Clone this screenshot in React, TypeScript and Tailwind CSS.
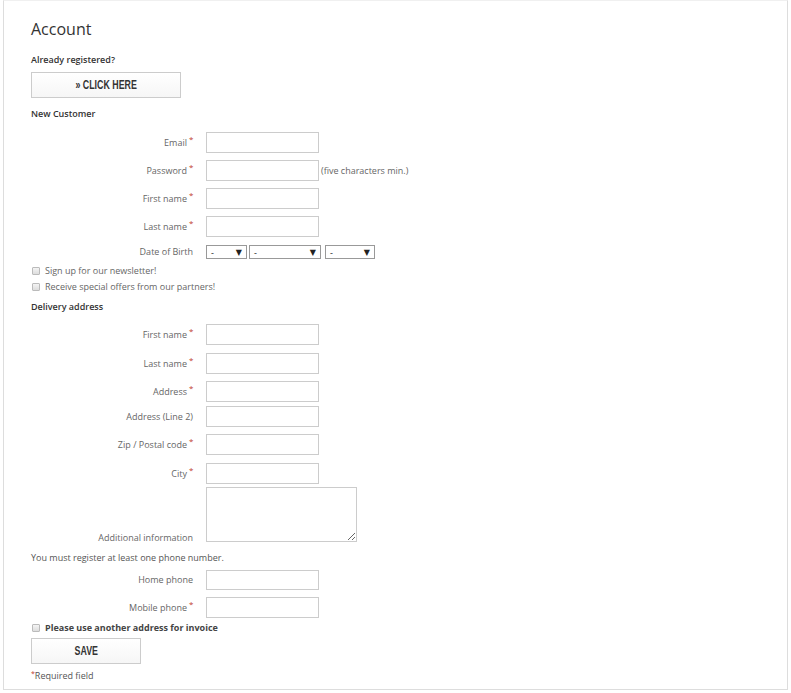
import React from 'react';

const font = { fontFamily: '"Open Sans", "DejaVu Sans", sans-serif' };

function Star() {
  return <span className="relative -top-[4px] ml-[2px] inline-block w-[5px] text-left text-[8px] leading-none text-[#c0392b]">*</span>;
}

function Row({ label, required, className = '', children, hint }: { label: string; required?: boolean; className?: string; children?: React.ReactNode; hint?: string }) {
  return (
    <div className={`flex items-center ${className}`}>
      <div className="w-[163px] text-right text-[9px] leading-[12px] text-[#666]">
        {label}
        {required ? <Star /> : <span className="inline-block w-[1px]" />}
      </div>
      <div className="ml-[12px] flex items-center">
        {children ?? <input className="h-[21px] w-[113px] border border-[#ccc] bg-white outline-none" />}
        {hint && <span className="ml-[2px] text-[9px] text-[#666]">{hint}</span>}
      </div>
    </div>
  );
}

function Select({ w }: { w: string }) {
  return (
    <div className={`flex h-[14px] ${w} items-center justify-between border border-[#999] px-[4px] text-[9px] leading-none text-[#222]`}>
      <span>-</span>
      <span className="text-[8px]">▼</span>
    </div>
  );
}

function Check({ label, bold }: { label: string; bold?: boolean }) {
  return (
    <div className="flex h-[12px] items-center">
      <span className="ml-[1px] h-[8px] w-[8px] rounded-[1px] border border-[#bbb] bg-gradient-to-b from-[#f4f4f4] to-[#ddd]" />
      <span className={`ml-[5px] text-[9px] leading-[12px] ${bold ? 'font-bold text-[#444]' : 'text-[#666]'}`}>{label}</span>
    </div>
  );
}

function Button({ w, children }: { w: string; children: React.ReactNode }) {
  return (
    <button className={`flex h-[26px] ${w} items-center justify-center border border-[#ccc] bg-gradient-to-b from-white to-[#f6f6f6]`}>
      <span className="inline-block scale-x-[0.68] text-[13px] font-bold text-[#333]" style={{ fontFamily: '"Liberation Sans", Arial, sans-serif' }}>
        {children}
      </span>
    </button>
  );
}

export default function App() {
  return (
    <div className="min-h-[693px] bg-white" style={font}>
      <div className="ml-[3px] w-[785px] border border-t-[#f0f0f0] border-[#ddd] pb-[6px] pl-[27px] pt-[19px]">
        <h1 className="text-[16px] leading-[18px] text-[#333]">Account</h1>
        <div className="mt-[16px] text-[9px] font-semibold leading-[12px] text-[#333]">Already registered?</div>
        <div className="mt-[6px]">
          <Button w="w-[150px]">» CLICK HERE</Button>
        </div>
        <div className="mt-[10px] text-[9px] font-semibold leading-[12px] text-[#333]">New Customer</div>

        <Row label="Email" required className="mt-[12px]" />
        <Row label="Password" required className="mt-[7px]" hint="(five characters min.)" />
        <Row label="First name" required className="mt-[7px]" />
        <Row label="Last name" required className="mt-[7px]" />
        <Row label="Date of Birth" className="mt-[8px]">
          <div className="flex">
            <Select w="w-[41px]" />
            <div className="ml-[2px]"><Select w="w-[72px]" /></div>
            <div className="ml-[4px]"><Select w="w-[50px]" /></div>
          </div>
        </Row>

        <div className="mt-[6px]"><Check label="Sign up for our newsletter!" /></div>
        <div className="mt-[4px]"><Check label="Receive special offers from our partners!" /></div>

        <div className="mt-[8px] text-[9px] font-semibold leading-[12px] text-[#333]">Delivery address</div>
        <Row label="First name" required className="mt-[11px]" />
        <Row label="Last name" required className="mt-[8px]" />
        <Row label="Address" required className="mt-[7px]" />
        <Row label="Address (Line 2)" className="mt-[4px]" />
        <Row label="Zip / Postal code" required className="mt-[7px]" />
        <Row label="City" required className="mt-[8px]" />
        <div className="mt-[3px] flex items-end">
          <div className="-mb-[2px] w-[163px] text-right text-[9px] leading-[12px] text-[#666]">
            Additional information<span className="inline-block w-[1px]" />
          </div>
          <textarea className="ml-[12px] block h-[55px] w-[151px] border border-[#ccc] bg-white outline-none" />
        </div>

        <div className="mt-[10px] text-[9px] leading-[12px] text-[#555]">You must register at least one phone number.</div>
        <Row label="Home phone" className="mt-[6px]">
          <input className="h-[20px] w-[113px] border border-[#ccc] bg-white outline-none" />
        </Row>
        <Row label="Mobile phone" required className="mt-[7px]" />

        <div className="mt-[4px]"><Check label="Please use another address for invoice" bold /></div>
        <div className="mt-[4px]">
          <Button w="w-[110px]">SAVE</Button>
        </div>
        <div className="mt-[6px] text-[9px] leading-[12px] text-[#555]">
          <span className="relative -top-[3px] text-[7px] text-[#c0392b]">*</span>Required field
        </div>
      </div>
    </div>
  );
}
